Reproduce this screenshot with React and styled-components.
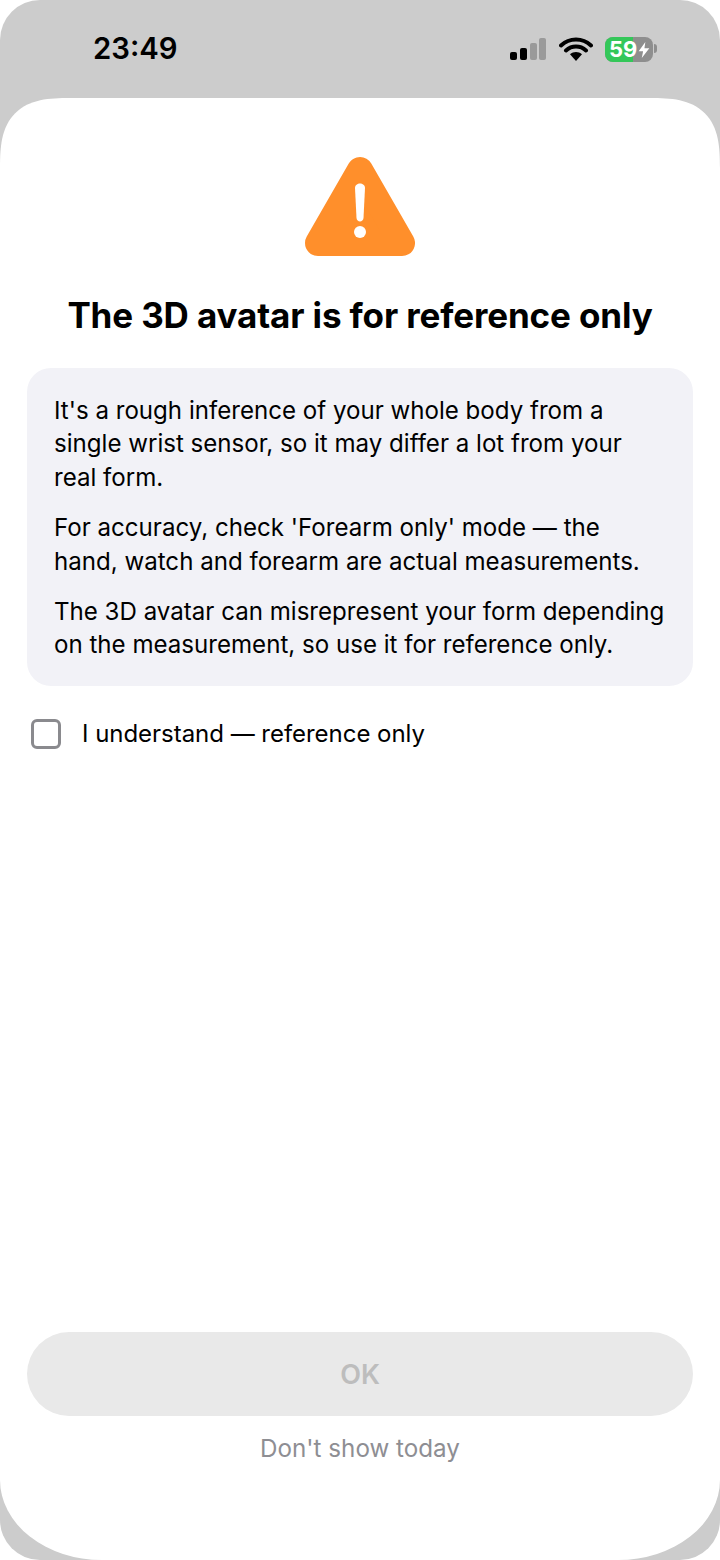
import React from "react";
import styled, { createGlobalStyle } from "styled-components";

const GlobalStyle = createGlobalStyle`
  html, body {
    margin: 0;
    padding: 0;
    background: #fff;
  }
  * {
    box-sizing: border-box;
  }
`;

const Phone = styled.div`
  width: 720px;
  height: 1560px;
  background: #cccccc;
  border-radius: 40px;
  overflow: hidden;
  display: flex;
  flex-direction: column;
  font-family: Inter, "Liberation Sans", sans-serif;
`;

const StatusBar = styled.div`
  height: 98px;
  flex: none;
  display: flex;
  justify-content: space-between;
  padding: 30px 63px 0 93px;
`;

const Clock = styled.div`
  font-size: 29.3px;
  line-height: 38px;
  font-weight: 600;
  color: #000;
`;

const StatusIcons = styled.div`
  position: relative;
  display: flex;
  align-items: center;
  height: 38px;
  gap: 12px;
`;

const Battery = styled.div`
  position: relative;
  width: 48px;
  height: 25px;
  border-radius: 8px;
  overflow: hidden;
  background: #8e8e8e;
  display: flex;
  margin-right: 4px;
`;

const BatteryFill = styled.div`
  width: 59%;
  background: #34c759;
`;

const BatteryLabel = styled.span`
  position: absolute;
  left: 4px;
  top: 0;
  font-size: 22px;
  line-height: 25px;
  font-weight: 700;
  color: #fff;
`;

const BatteryBolt = styled.svg`
  position: absolute;
  right: 2px;
  top: 5px;
`;

const BatteryCap = styled.div`
  position: absolute;
  right: 0;
  top: 14px;
  width: 3px;
  height: 9px;
  border-radius: 0 3px 3px 0;
  background: #8e8e8e;
`;

const Sheet = styled.main`
  flex: 1;
  background: #fff;
  border-radius: 70px 70px 102px 102px / 70px 70px 80px 80px;
  corner-shape: superellipse(1.5) superellipse(1.5) round round;
  padding: 58px 27px 0;
  display: flex;
  flex-direction: column;
  align-items: center;
`;

const WarningIcon = styled.svg`
  display: block;
  flex: none;
`;

const Title = styled.h1`
  margin: 37px 0 0;
  font-size: 35px;
  line-height: 44px;
  font-weight: 700;
  letter-spacing: -0.13px;
  color: #000;
  text-align: center;
  white-space: nowrap;
`;

const InfoCard = styled.section`
  width: 100%;
  margin-top: 31px;
  padding: 26px 27px 24px;
  background: #f2f2f7;
  border-radius: 24px;
  display: flex;
  flex-direction: column;
  gap: 17px;
`;

const Paragraph = styled.p`
  margin: 0;
  font-size: 24.1px;
  line-height: 33.4px;
  color: #000;
  white-space: nowrap;
`;

const CheckRow = styled.label`
  width: 100%;
  margin-top: 32px;
  padding-left: 4px;
  display: flex;
  align-items: center;
  gap: 21px;
  font-size: 24px;
  line-height: 32px;
  letter-spacing: -0.03px;
  color: #000;
`;

const CheckBox = styled.span`
  width: 30px;
  height: 30px;
  flex: none;
  border: 3px solid #8a8a8e;
  border-radius: 6px;
`;

const Footer = styled.div`
  width: 100%;
  margin-top: auto;
  padding-bottom: 95px;
  display: flex;
  flex-direction: column;
  align-items: center;
  gap: 17px;
`;

const OkButton = styled.button`
  width: 100%;
  height: 84px;
  border: 0;
  border-radius: 42px;
  background: #e9e9e9;
  color: #bdbdbd;
  font-family: inherit;
  font-size: 27px;
  font-weight: 600;
`;

const SkipLink = styled.div`
  font-size: 24.2px;
  line-height: 32px;
  color: #8e8e93;
`;

const SignalBar = styled.rect`
  fill: ${(p) => (p.$on ? "#000" : "#9a9a9a")};
`;

const App = () => (
  <>
    <GlobalStyle />
    <Phone>
      <StatusBar>
        <Clock>23:49</Clock>
        <StatusIcons>
          <svg width="38" height="24" viewBox="0 0 38 24">
            <SignalBar $on x="1" y="15" width="7" height="8" rx="2" />
            <SignalBar $on x="11" y="11" width="7" height="12" rx="2" />
            <SignalBar x="21" y="6" width="7" height="17" rx="2" />
            <SignalBar x="30" y="1" width="7" height="22" rx="2" />
          </svg>
          <svg width="34" height="26" viewBox="0 0 34 26">
            <path
              d="M2 9.500C10.500 1.500 23.500 1.500 32 9.500M7 14.500C12.800 9.300 21.200 9.300 27 14.500"
              fill="none"
              stroke="#000"
              strokeWidth="4"
              strokeLinecap="round"
            />
            <path d="M11 18.300c3.500-3 8.500-3 12 0L17 25z" fill="#000" />
          </svg>
          <Battery>
            <BatteryFill />
            <BatteryLabel>59</BatteryLabel>
            <BatteryBolt width="14" height="16" viewBox="0 0 14 18">
              <path d="M8.500 0 1 10.500h5L4.500 18 13 7H7.500z" fill="#fff" />
            </BatteryBolt>
          </Battery>
          <BatteryCap />
        </StatusIcons>
      </StatusBar>
      <Sheet>
        <WarningIcon width="110" height="100" viewBox="0 0 110 100">
          <polygon
            points="55,14 97,87 13,87"
            fill="#ff8f2b"
            stroke="#ff8f2b"
            strokeWidth="26"
            strokeLinejoin="round"
          />
          <path
            d="M50 32c0-6 10-6 10 0l-1.500 30c-.3 4.500-6.700 4.500-7 0z"
            fill="#fff"
          />
          <circle cx="55" cy="76" r="6" fill="#fff" />
        </WarningIcon>
        <Title>The 3D avatar is for reference only</Title>
        <InfoCard>
          <Paragraph>
            It's a rough inference of your whole body from a
            <br />
            single wrist sensor, so it may differ a lot from your
            <br />
            real form.
          </Paragraph>
          <Paragraph>
            For accuracy, check 'Forearm only' mode — the
            <br />
            hand, watch and forearm are actual measurements.
          </Paragraph>
          <Paragraph>
            The 3D avatar can misrepresent your form depending
            <br />
            on the measurement, so use it for reference only.
          </Paragraph>
        </InfoCard>
        <CheckRow>
          <CheckBox />I understand — reference only
        </CheckRow>
        <Footer>
          <OkButton disabled>OK</OkButton>
          <SkipLink>Don't show today</SkipLink>
        </Footer>
      </Sheet>
    </Phone>
  </>
);

export default App;
